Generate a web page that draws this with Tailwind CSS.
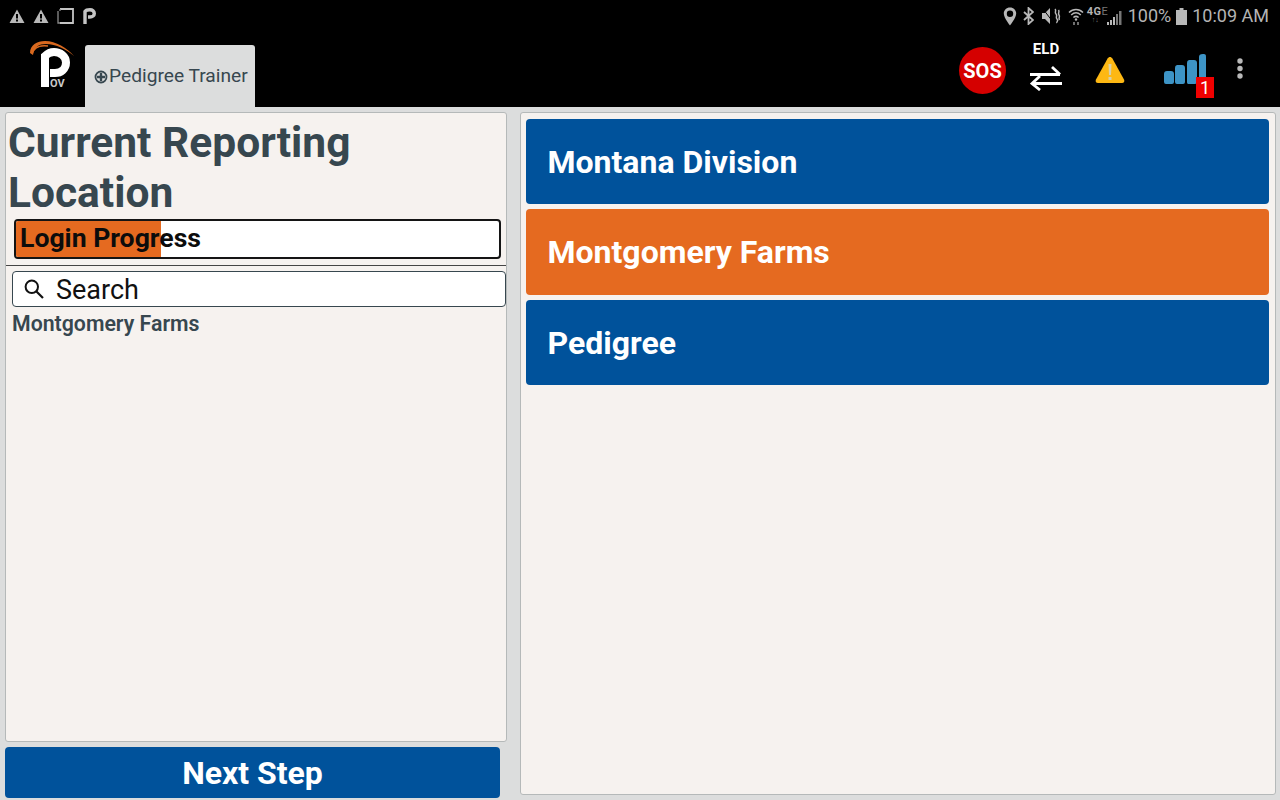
<!DOCTYPE html>
<html lang="en">
  <head>
    <meta charset="UTF-8" />
    <meta name="viewport" content="width=device-width, initial-scale=1.0" />
    <title>Current Reporting Location</title>
    <script src="https://cdn.jsdelivr.net/npm/@tailwindcss/browser@4"></script>
  </head>
  <body>
    <div class="flex flex-col w-[1280px] h-[800px] overflow-hidden bg-[#dcdddd] font-['Roboto',sans-serif]">
      <!-- android status bar -->
      <div class="flex items-center justify-between h-[32px] bg-black pl-[9px] pr-[11px] text-[#b4b4b4]">
        <div class="flex items-center gap-[8px]">
          <svg width="16" height="14" viewBox="0 0 16 14"><path fill="#b8b8b8" fill-rule="evenodd" d="M8 0.500 15.500 14H0.500ZM7 5v4.500h2V5ZM7 10.500v2h2v-2Z"/></svg>
          <svg width="16" height="14" viewBox="0 0 16 14"><path fill="#b8b8b8" fill-rule="evenodd" d="M8 0.500 15.500 14H0.500ZM7 5v4.500h2V5ZM7 10.500v2h2v-2Z"/></svg>
          <svg width="17" height="16" viewBox="0 0 17 16"><path fill="none" stroke="#c4c4c4" stroke-width="1.800" d="M3 1h13v14H3"/><path fill="none" stroke="#8a8a8a" stroke-width="1.300" d="M1 3v12h2M3 1v2"/></svg>
          <svg width="13" height="16" viewBox="0 0 13 16" class="ml-[1px]"><path fill="none" stroke="#c4c4c4" stroke-width="3.400" d="M2 16V3.500C3 2 5 1.800 7 1.800c2.500 0 4.300 1.500 4.300 3.600S9.500 9 7 9H5"/></svg>
        </div>
        <div class="flex items-center text-[18px] leading-none">
          <svg width="14" height="19" viewBox="0 0 14 19" class="mr-[6px]"><path fill="#b8b8b8" fill-rule="evenodd" d="M7 0.500C3.400 0.500 0.800 3.200 0.800 6.600 0.800 11 7 18.500 7 18.500S13.200 11 13.200 6.600C13.200 3.200 10.600 0.500 7 0.500ZM7 3.500a3.200 3.200 0 1 1 0 6.400 3.200 3.200 0 0 1 0-6.400Z"/></svg>
          <svg width="11" height="18" viewBox="0 0 11 18" class="mr-[7px]"><path fill="none" stroke="#b8b8b8" stroke-width="1.800" d="M1 5l9 8-4.500 4V1L10 5 1 13"/></svg>
          <svg width="20" height="18" viewBox="0 0 20 18" class="mr-[7px]"><path fill="#b8b8b8" d="M1 6h3l5-5v16l-5-5H1Z"/><path fill="none" stroke="#000" stroke-width="1" d="M0.500 0 12 15"/><path fill="none" stroke="#b8b8b8" stroke-width="1.500" d="M14 2c2 2-1 3 1 5s-1 3 1 5-1 3 0 4M17.500 3c1.500 2-1 3 0.500 5s-1 3 0.500 5"/></svg>
          <svg width="16" height="19" viewBox="0 0 16 19" class="mr-[3px]"><path fill="none" stroke="#b8b8b8" stroke-width="1.500" d="M1 5.500c4-4 10-4 14 0M3.200 8c3-2.800 6.600-2.800 9.600 0M5.400 10.500c1.700-1.500 3.500-1.500 5.200 0"/><circle cx="8" cy="12.500" r="1.200" fill="#b8b8b8"/><path stroke="#b8b8b8" stroke-width="1.200" d="M6 18v-3M10 15v3"/></svg>
          <span class="flex flex-col items-start w-[20px]">
            <span class="text-[11px] leading-[11px] font-bold tracking-[0.500px] -mt-[3px] whitespace-nowrap">4G<span class="font-normal text-[#777]">E</span></span>
            <span class="text-[7px] leading-[7px] pl-[5px] text-[#777]">↑↓</span>
          </span>
          <svg width="15" height="14" viewBox="0 0 15 14" class="mr-[6px] mt-[3px]"><path fill="#b8b8b8" d="M0 11h2v3H0ZM3 9h2v5H3ZM6 6h2v8H6Z"/><path fill="#777" d="M9 3h2v11H9ZM12 0h2.500v14H12Z"/></svg>
          <span class="mr-[5px]">100%</span>
          <svg width="11" height="17" viewBox="0 0 11 17" class="mr-[5px]"><path fill="#b8b8b8" d="M3.500 0h4v2H11v15H0V2h3.500Z"/></svg>
          <span>10:09 AM</span>
        </div>
      </div>

      <!-- app header -->
      <div class="flex h-[75px] bg-black">
        <div class="relative w-[85px] h-full shrink-0">
          <svg width="50" height="52" viewBox="0 0 50 52" class="absolute left-[28px] top-[7px]">
            <path fill="#d9691f" d="M2 14C2 6 9 2 17 2c11 0 22 7 29 15C38 10 28 5 18 5 11 5 6 8 5 16Z"/>
            <path fill="none" stroke="#d9691f" stroke-width="1.500" d="M4 15C6 8 13 6 20 7"/>
            <path fill="none" stroke="#ffffff" stroke-width="8" d="M17 48V17c3-3 6-4 9-4 6 0 12 4 12 10.500S33 34 27 34h-5"/>
            <text x="22" y="48" font-family="Roboto" font-weight="700" font-size="11" fill="#c9c9c9">OV</text>
          </svg>
        </div>
        <div class="flex items-center self-end w-[170px] h-[62px] rounded-t-[3px] bg-[#dcdddd] pl-[9px] text-[19.200px] text-[#37474f] whitespace-nowrap">
          <svg width="14" height="14" viewBox="0 0 14 14" class="mt-[1px] mr-[1px] shrink-0"><circle cx="7" cy="7" r="5.500" fill="none" stroke="#37474f" stroke-width="1.800"/><path stroke="#37474f" stroke-width="2.400" d="M7 3v8M3 7h8"/></svg>
          <span>Pedigree Trainer</span>
        </div>
        <div class="flex flex-1 items-start">
          <div class="ml-[704px] mt-[15px] flex items-center justify-center w-[47px] h-[47px] rounded-full bg-[#d50000] text-white font-bold text-[20px]">SOS</div>
          <div class="ml-[24px] flex flex-col items-center w-[32px] mt-[7px]">
            <span class="text-[15px] leading-[20px] font-bold text-white">ELD</span>
            <svg width="32" height="26" viewBox="0 0 32 26" class="mt-[6px]"><path fill="none" stroke="#ffffff" stroke-width="2.800" d="M0 9.500h30M22 2l8 7.500M2 18.500h30M10 11l-8 7.500 8 6.500"/></svg>
          </div>
          <svg width="30" height="28" viewBox="0 0 30 28" class="ml-[33px] mt-[24px]"><path fill="#fdb813" d="M15 1c1 0 1.800 0.600 2.400 1.600L29 23.500c0.900 1.800 0 3.500-2 3.500H3c-2 0-2.900-1.700-2-3.500L12.600 2.600C13.200 1.600 14 1 15 1Z"/><path fill="#d8d0a8" d="M13.500 8h3l-0.500 11h-2ZM13.500 21h3v3h-3Z"/></svg>
          <div class="relative ml-[39px] mt-[22px] w-[52px] h-[46px]">
            <svg width="44" height="32" viewBox="0 0 44 32" class="absolute left-0 top-0"><path fill="#3d94c6" d="M3 17h4a3 3 0 0 1 3 3v8a2 2 0 0 1-2 2H2a2 2 0 0 1-2-2v-8a3 3 0 0 1 3-3ZM13 11h5a3 3 0 0 1 3 3v14a2 2 0 0 1-2 2h-6a2 2 0 0 1-2-2V14a3 3 0 0 1 2-3ZM25 6h5a3 3 0 0 1 3 3v19a2 2 0 0 1-2 2h-7a2 2 0 0 1-1-2V9a3 3 0 0 1 2-3ZM35 3c0-2 1-3 4-3s3 1 3 3v21h-7Z"/></svg>
            <div class="absolute left-[32px] top-[23px] flex items-center justify-center w-[18px] h-[21px] bg-[#f00000] text-white text-[18px] font-normal leading-none">1</div>
          </div>
          <svg width="8" height="24" viewBox="0 0 8 24" class="ml-[20px] mt-[25px]"><circle cx="4" cy="4" r="2.700" fill="#b9b9b9"/><circle cx="4" cy="11.500" r="2.700" fill="#b9b9b9"/><circle cx="4" cy="19" r="2.700" fill="#b9b9b9"/></svg>
        </div>
      </div>

      <!-- main -->
      <div class="flex flex-1 min-h-0 pt-[5px] pl-[5px] pr-[4px] pb-[2px]">
        <div class="flex flex-col w-[502px] shrink-0">
          <div class="flex-1 min-h-0 rounded-[3px] border border-[#b5b9b9] bg-[#f6f2ef]">
            <h1 class="pl-[2px] pt-[5px] pr-[20px] text-[42.500px] leading-[50px] font-bold text-[#37474f]">Current Reporting Location</h1>
            <div class="relative mx-[8px] mt-[1px] h-[40px] w-[487px] overflow-hidden rounded-[4px] border-2 border-[#141414] bg-white">
              <div class="absolute left-0 top-0 h-full w-[145px] bg-[#e56a20]"></div>
              <span class="absolute left-[4px] top-[2px] text-[26.600px] leading-[30px] font-bold text-[#0c0c0c] whitespace-nowrap">Login Progress</span>
            </div>
            <div class="mt-[6px] h-px bg-[#454545]"></div>
            <div class="flex items-center ml-[6px] mt-[5px] h-[36px] w-[494px] rounded-[4px] border border-[#37474f] bg-white">
              <svg width="22" height="22" viewBox="0 0 22 22" class="ml-[10px] shrink-0"><circle cx="8.800" cy="8.800" r="6.200" fill="none" stroke="#111" stroke-width="2"/><path stroke="#111" stroke-width="2.200" d="M13.500 13.500 20 20"/></svg>
              <span class="ml-[11px] mt-[2px] text-[27px] leading-none text-[#111]">Search</span>
            </div>
            <div class="ml-[6px] mt-[4px] text-[21.300px] leading-[26px] font-semibold text-[#37474f]">Montgomery Farms</div>
          </div>
          <button class="mt-[5px] h-[51px] w-[495px] rounded-[4px] bg-[#00529b] pt-[1px] text-[32px] leading-[50px] font-bold text-white">Next Step</button>
        </div>
        <div class="ml-[13px] flex-1 flex flex-col gap-[5px] rounded-[3px] border border-[#b5b9b9] bg-[#f6f2ef] pt-[6px] pl-[5px] pr-[6px] mb-[3px]">
          <div class="flex items-center h-[85px] rounded-[4px] bg-[#00529b] pl-[21.500px] text-[32px] font-bold text-white">Montana Division</div>
          <div class="flex items-center h-[86px] rounded-[4px] bg-[#e56a20] pl-[21.500px] text-[32px] font-bold text-white">Montgomery Farms</div>
          <div class="flex items-center h-[85px] rounded-[4px] bg-[#00529b] pl-[21.500px] text-[32px] font-bold text-white">Pedigree</div>
        </div>
      </div>
    </div>
  </body>
</html>
